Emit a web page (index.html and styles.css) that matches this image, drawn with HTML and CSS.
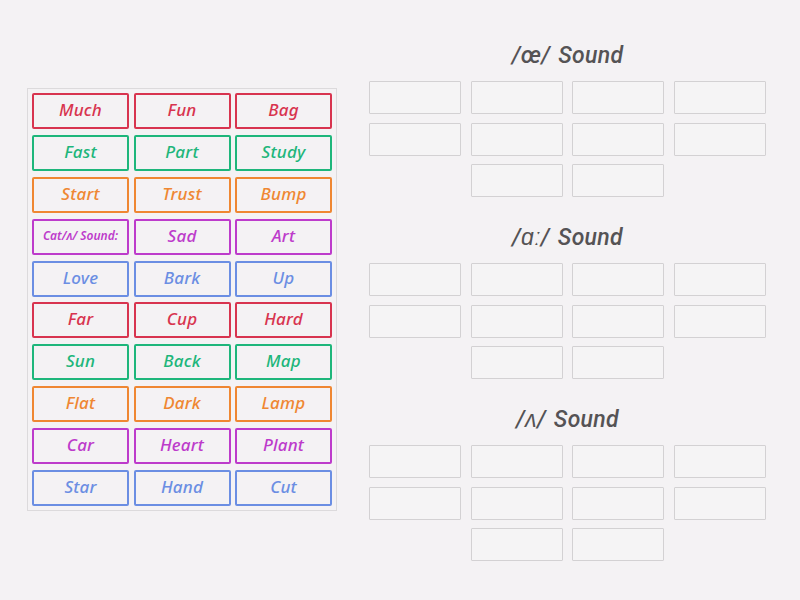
FILE: index.html
```html
<!DOCTYPE html>
<html>
<head>
<meta charset="utf-8">
<link rel="stylesheet" href="styles.css">
</head>
<body>
<div class="page">
  <div class="bank">
    <div class="card red">Much</div><div class="card red">Fun</div><div class="card red">Bag</div>
    <div class="card green">Fast</div><div class="card green">Part</div><div class="card green">Study</div>
    <div class="card orange">Start</div><div class="card orange">Trust</div><div class="card orange">Bump</div>
    <div class="card purple small">Cat/ʌ/ Sound:</div><div class="card purple">Sad</div><div class="card purple">Art</div>
    <div class="card blue">Love</div><div class="card blue">Bark</div><div class="card blue">Up</div>
    <div class="card red">Far</div><div class="card red">Cup</div><div class="card red">Hard</div>
    <div class="card green">Sun</div><div class="card green">Back</div><div class="card green">Map</div>
    <div class="card orange">Flat</div><div class="card orange">Dark</div><div class="card orange">Lamp</div>
    <div class="card purple">Car</div><div class="card purple">Heart</div><div class="card purple">Plant</div>
    <div class="card blue">Star</div><div class="card blue">Hand</div><div class="card blue">Cut</div>
  </div>
  <div class="groups">
    <section class="group">
      <h2 class="title">/œ/ Sound</h2>
      <div class="slots">
        <div class="slot"></div><div class="slot"></div><div class="slot"></div><div class="slot"></div>
        <div class="slot"></div><div class="slot"></div><div class="slot"></div><div class="slot"></div>
        <div class="slot c2"></div><div class="slot"></div>
      </div>
    </section>
    <section class="group">
      <h2 class="title">/ɑː/ Sound</h2>
      <div class="slots">
        <div class="slot"></div><div class="slot"></div><div class="slot"></div><div class="slot"></div>
        <div class="slot"></div><div class="slot"></div><div class="slot"></div><div class="slot"></div>
        <div class="slot c2"></div><div class="slot"></div>
      </div>
    </section>
    <section class="group">
      <h2 class="title">/ʌ/ Sound</h2>
      <div class="slots">
        <div class="slot"></div><div class="slot"></div><div class="slot"></div><div class="slot"></div>
        <div class="slot"></div><div class="slot"></div><div class="slot"></div><div class="slot"></div>
        <div class="slot c2"></div><div class="slot"></div>
      </div>
    </section>
  </div>
</div>
</body>
</html>
```
FILE: styles.css
```css
html, body {
  margin: 0;
  padding: 0;
  background: #f4f2f4;
  width: 800px;
  height: 600px;
  overflow: hidden;
}
.page {
  display: flex;
  align-items: flex-start;
  padding-left: 27px;
  gap: 32px;
}
.bank {
  margin-top: 88px;
  border: 1px solid #dcdadc;
  padding: 4px;
  display: grid;
  grid-template-columns: 97px 97px 97px;
  grid-auto-rows: 36px;
  column-gap: 4.5px;
  row-gap: 5.9px;
}
.card {
  box-sizing: border-box;
  border: 2px solid currentColor;
  border-radius: 2px;
  display: flex;
  align-items: center;
  justify-content: center;
  padding-bottom: 3px;
  font-family: "Noto Sans", sans-serif;
  font-style: italic;
  font-weight: 500;
  font-size: 17px;
  letter-spacing: 0.2px;
}
.card.small {
  font-size: 12px;
  font-weight: 600;
  letter-spacing: 0;
}
.red { color: #d8344f; }
.green { color: #1eb67b; }
.orange { color: #ef8732; }
.purple { color: #bd3bcb; }
.blue { color: #6b8ee3; }
.groups {
  width: 397px;
  margin-top: 38px;
  display: flex;
  flex-direction: column;
  gap: 23px;
}
.title {
  margin: 0 0 11px 0;
  height: 32px;
  line-height: 36px;
  text-align: center;
  font-family: Roboto, sans-serif;
  font-style: italic;
  font-weight: 500;
  font-size: 23px;
  letter-spacing: 0.3px;
  word-spacing: 2px;
  color: #555355;
}
.slots {
  display: grid;
  grid-template-columns: repeat(4, 92px);
  grid-auto-rows: 33px;
  column-gap: 9.6px;
  row-gap: 8.5px;
}
.slot {
  border: 1px solid #d3d1d3;
  border-radius: 1px;
  background: #f5f4f5;
}
.c2 { grid-column: 2; }
```
